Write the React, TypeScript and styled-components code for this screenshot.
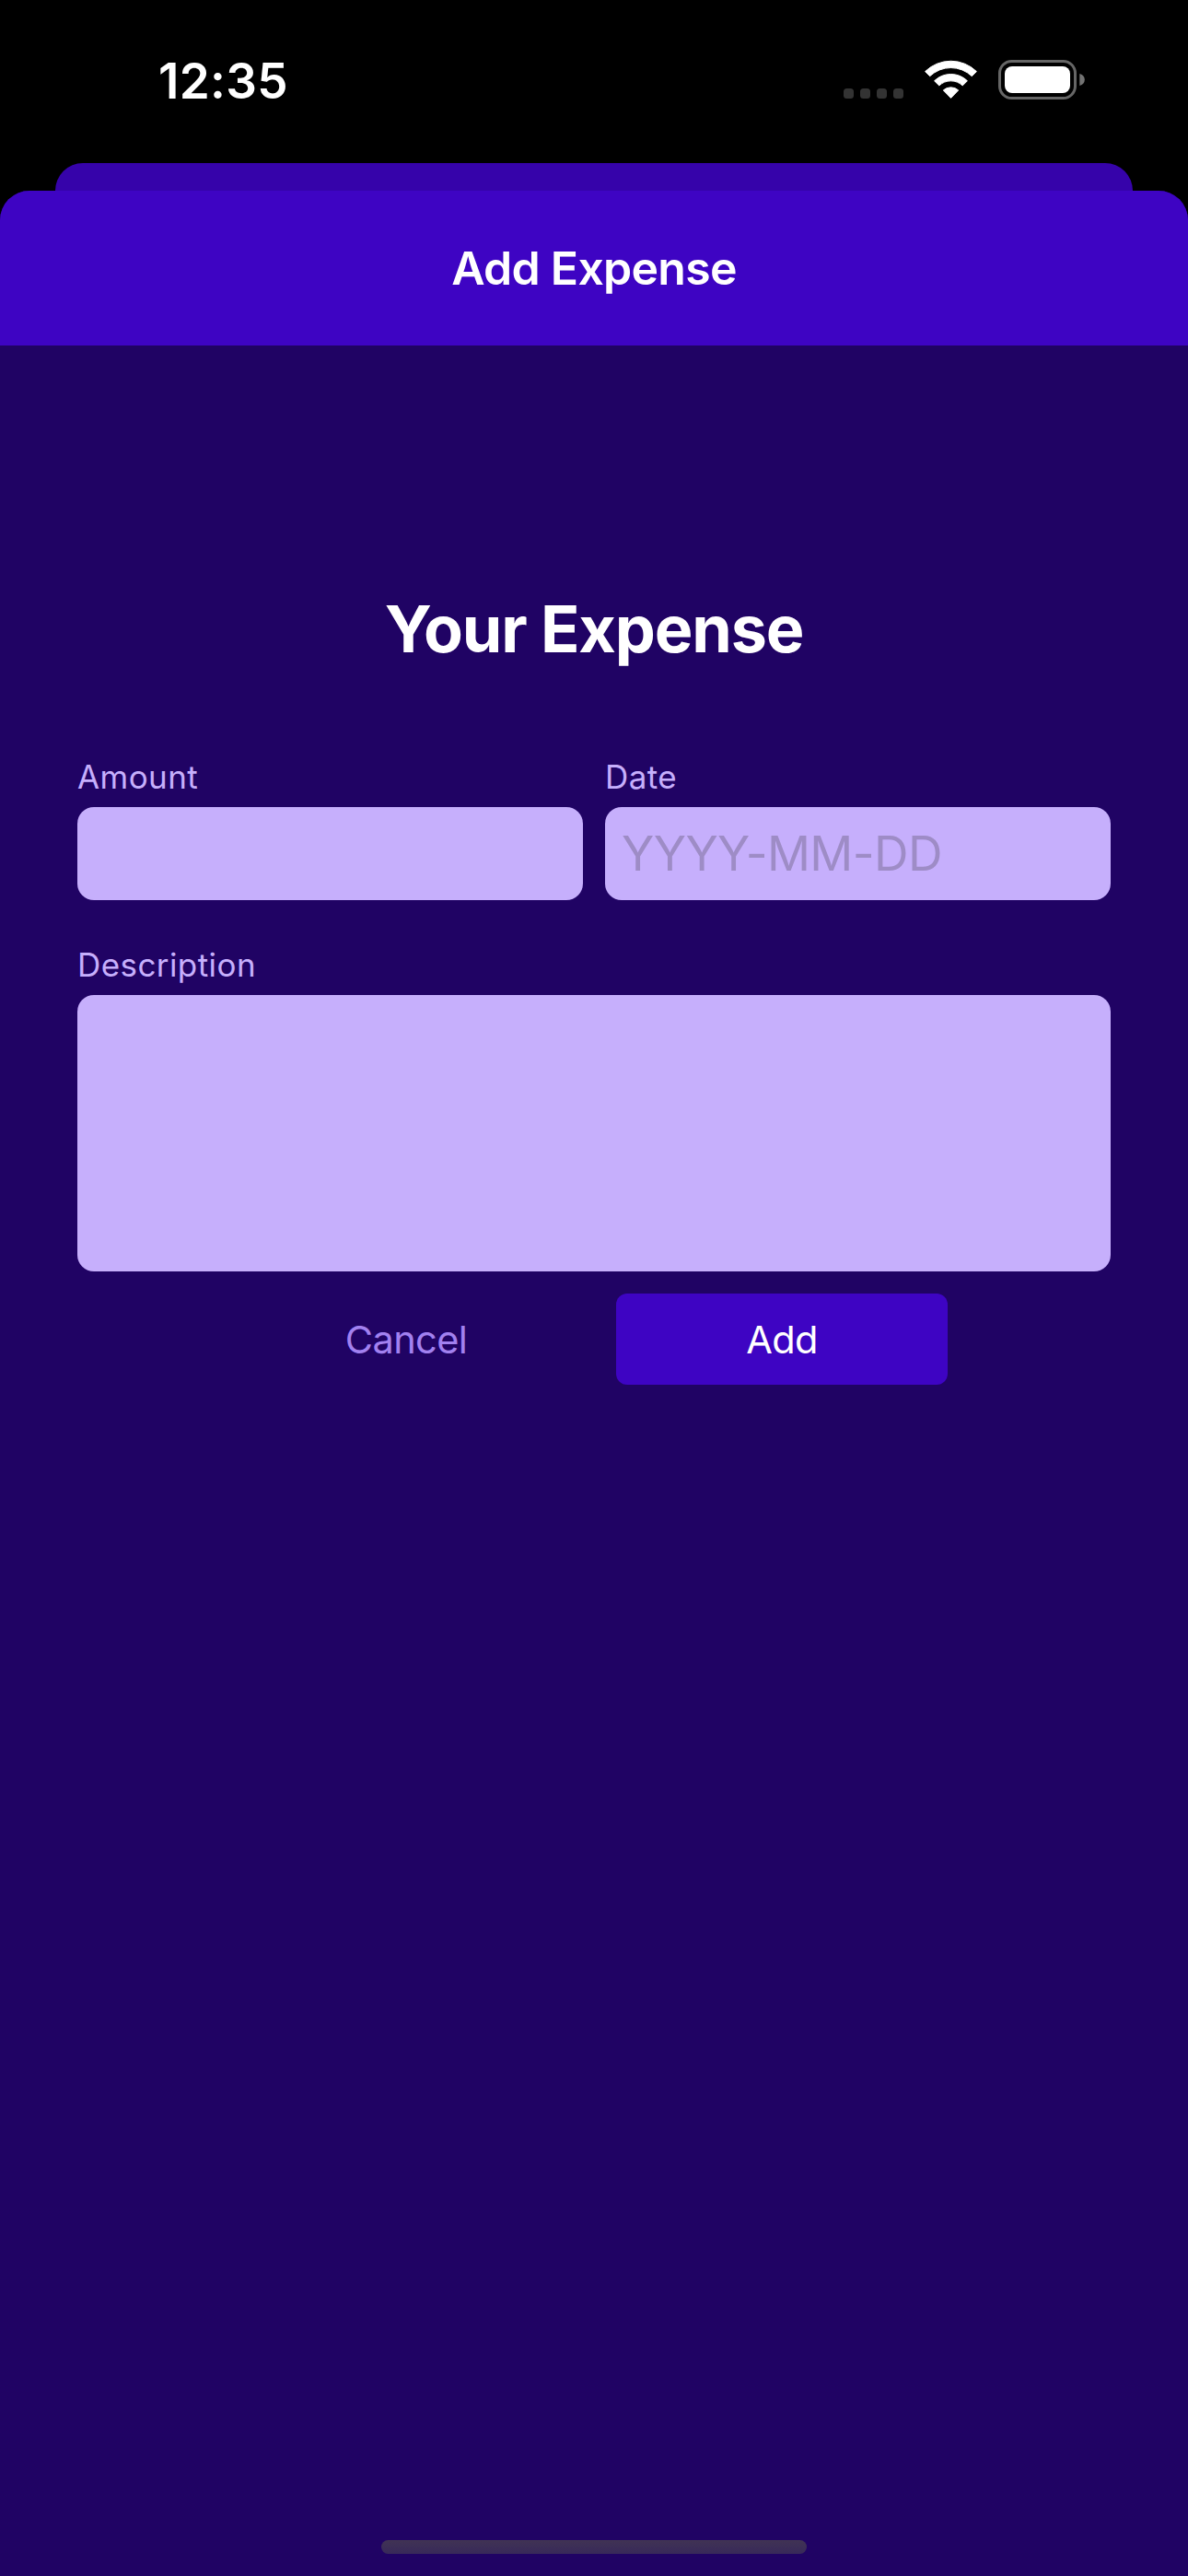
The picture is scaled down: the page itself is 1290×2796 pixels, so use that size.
import React from "react";
import styled, { createGlobalStyle } from "styled-components";

const colors = {
  primary100: "#c6affc",
  primary200: "#a281f0",
  primary500: "#3e04c3",
  primary500Dim: "#3603aa",
  primary800: "#200364",
  placeholder: "#9e8cc6",
};

const GlobalStyle = createGlobalStyle`
  * { box-sizing: border-box; }
  html, body { margin: 0; padding: 0; background: #000; }
  body, input, textarea, button { font-family: Inter, "Liberation Sans", sans-serif; }
`;

const Screen = styled.div`
  display: flex;
  flex-direction: column;
  width: 1290px;
  height: 2796px;
  overflow: hidden;
  background: #000;
`;

const StatusBar = styled.header`
  display: flex;
  flex: none;
  justify-content: space-between;
  align-items: flex-start;
  height: 177px;
  padding: 56px 110px 0 172px;
`;

const Clock = styled.time`
  font-size: 53px;
  line-height: 64px;
  font-weight: 600;
  letter-spacing: 0.3px;
  color: #fff;
`;

const StatusIcons = styled.svg`
  display: block;
  width: 268px;
  height: 64px;
`;

const BackCard = styled.div`
  flex: none;
  height: 30px;
  margin: 0 60px;
  border-radius: 30px 30px 0 0;
  background: ${colors.primary500Dim};
`;

const Sheet = styled.main`
  display: flex;
  flex: 1;
  flex-direction: column;
  overflow: hidden;
  border-radius: 32px 32px 0 0;
  background: ${colors.primary800};
`;

const SheetHeader = styled.div`
  display: flex;
  flex: none;
  align-items: center;
  justify-content: center;
  height: 168px;
  background: ${colors.primary500};
`;

const SheetTitle = styled.h1`
  margin: 0;
  font-size: 50px;
  line-height: 60px;
  font-weight: 600;
  letter-spacing: -0.75px;
  color: #fff;
`;

const Form = styled.form`
  display: flex;
  flex: 1;
  flex-direction: column;
  padding: 264px 84px 0;
`;

const FormTitle = styled.h2`
  margin: 0 0 95px;
  font-size: 70px;
  line-height: 88px;
  font-weight: 700;
  letter-spacing: -1.15px;
  text-align: center;
  color: #fff;
`;

const FieldRow = styled.div`
  display: flex;
  gap: 24px;
  margin-bottom: 49px;
`;

const Field = styled.label<{ $block?: boolean }>`
  display: flex;
  flex: ${(p) => (p.$block ? "none" : "1")};
  flex-direction: column;
  gap: 12px;
  min-width: 0;
`;

const FieldLabel = styled.span`
  font-size: 35px;
  line-height: 42px;
  letter-spacing: 0.42px;
  color: ${colors.primary100};
`;

const Input = styled.input`
  width: 100%;
  height: 101px;
  padding: 0 18px;
  border: 0;
  border-radius: 18px;
  outline: 0;
  background: ${colors.primary100};
  color: ${colors.primary500};
  font-size: 52px;
  letter-spacing: -0.6px;
  &::placeholder {
    color: ${colors.placeholder};
    opacity: 1;
  }
`;

const TextArea = styled.textarea`
  display: block;
  width: 100%;
  height: 300px;
  padding: 18px;
  border: 0;
  border-radius: 18px;
  outline: 0;
  resize: none;
  background: ${colors.primary100};
  color: ${colors.primary500};
  font-size: 52px;
`;

const Actions = styled.div`
  display: flex;
  justify-content: center;
  gap: 48px;
  margin-top: 24px;
`;

const Button = styled.button<{ $flat?: boolean }>`
  width: 360px;
  height: 99px;
  padding: 0;
  border: 0;
  border-radius: 12px;
  background: ${(p) => (p.$flat ? "transparent" : colors.primary500)};
  color: ${(p) => (p.$flat ? colors.primary200 : "#fff")};
  font-size: 41.5px;
  line-height: 50px;
  letter-spacing: -0.6px;
`;

const HomeIndicator = styled.div`
  flex: none;
  align-self: center;
  width: 462px;
  height: 15px;
  margin-bottom: 24px;
  border-radius: 8px;
  background: linear-gradient(#403354, #38295a);
`;

export default function App() {
  return (
    <>
      <GlobalStyle />
      <Screen>
        <StatusBar>
          <Clock>12:35</Clock>
          <StatusIcons viewBox="912 56 268 64">
            <g fill="#333">
              {[916, 934, 952, 970].map((x) => (
                <rect key={x} x={x} y="96" width="11" height="11" rx="3.5" />
              ))}
            </g>
            <g fill="#fff" stroke="#fff" strokeWidth="1" strokeLinejoin="round">
              <path d="M1004.6 77.6A40 40 0 0 1 1060.4 77.6L1055.3 82.7A33 33 0 0 0 1009.7 82.7Z" />
              <path d="M1014.6 87.8A25.5 25.5 0 0 1 1050.4 87.8L1045.2 92.9A18.5 18.5 0 0 0 1019.8 92.9Z" />
              <path d="M1024.3 97.9A12.5 12.5 0 0 1 1040.7 97.9L1032.5 106.4Z" />
            </g>
            <rect x="1085.5" y="66.5" width="82" height="40" rx="13" fill="none" stroke="#666" strokeWidth="3" />
            <rect x="1091" y="72" width="71" height="29" rx="8" fill="#fff" />
            <path d="M1172.3 80Q1177.8 81.8 1177.8 86.5T1172.3 93Z" fill="#737373" />
          </StatusIcons>
        </StatusBar>
        <BackCard />
        <Sheet>
          <SheetHeader>
            <SheetTitle>Add Expense</SheetTitle>
          </SheetHeader>
          <Form onSubmit={(e) => e.preventDefault()}>
            <FormTitle>Your Expense</FormTitle>
            <FieldRow>
              <Field>
                <FieldLabel>Amount</FieldLabel>
                <Input inputMode="decimal" />
              </Field>
              <Field>
                <FieldLabel>Date</FieldLabel>
                <Input placeholder="YYYY-MM-DD" maxLength={10} />
              </Field>
            </FieldRow>
            <Field $block>
              <FieldLabel>Description</FieldLabel>
              <TextArea />
            </Field>
            <Actions>
              <Button type="button" $flat>
                Cancel
              </Button>
              <Button type="submit">Add</Button>
            </Actions>
          </Form>
          <HomeIndicator />
        </Sheet>
      </Screen>
    </>
  );
}
